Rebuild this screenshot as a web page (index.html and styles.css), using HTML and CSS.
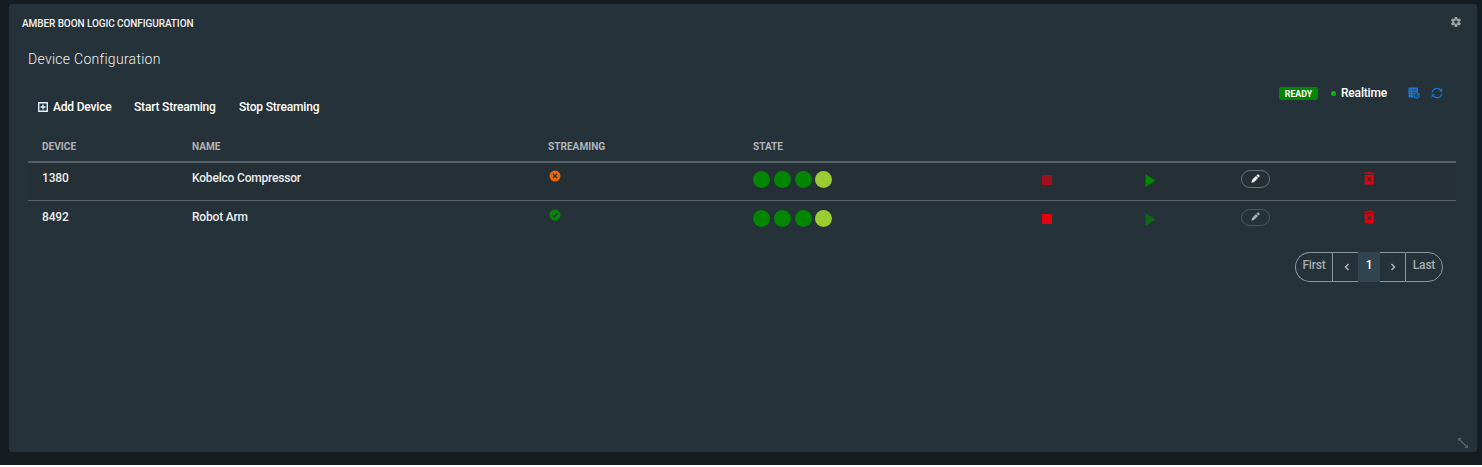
FILE: index.html
```html
<!DOCTYPE html>
<html lang="en">
<head>
<meta charset="utf-8">
<title>Amber Boon Logic Configuration</title>
<link rel="stylesheet" href="styles.css">
</head>
<body>
<svg class="sprite" aria-hidden="true">
  <symbol id="pencil" viewBox="0 0 12 12"><path d="M.5 11.500l.9-3.600L6.600 2.600l2.800 2.800L4.100 10.600zM7.300 1.900L8.800.600q.6-.5 1.200 0l1.400 1.400q.5.600 0 1.200L10.100 4.700z"/></symbol>
  <symbol id="trash" viewBox="0 0 12 14"><path d="M0 1h3.800V0h4v1H11.500v1.500H0z" opacity=".75"/><path fill-rule="evenodd" d="M.8 3.500h9.900V14H.8zM3.300 6l1.700 2-1.900 2.200.9.700 1.800-2 1.800 2 .9-.7L6.600 8l1.700-2-.9-.7-1.600 1.800-1.600-1.800z"/></symbol>
  <symbol id="play" viewBox="0 0 11 13"><path d="M.5 0L10.500 6.500.5 13z"/></symbol>
</svg>
<main class="screen">
  <section class="panel">
    <header class="panel-head">
      <h1 class="panel-title">AMBER BOON LOGIC CONFIGURATION</h1>
      <svg class="gear" viewBox="0 0 24 24"><path d="M19.400 13a7.500 7.500 0 0 0 0-2l2.200-1.700a.5.500 0 0 0 .1-.6l-2-3.500a.5.500 0 0 0-.6-.2l-2.600 1a8 8 0 0 0-1.700-1l-.4-2.700a.5.500 0 0 0-.5-.4h-4a.5.500 0 0 0-.5.400L9 5a8 8 0 0 0-1.700 1l-2.600-1a.5.500 0 0 0-.6.200l-2 3.500a.5.500 0 0 0 .1.600L4.400 11a8 8 0 0 0 0 2l-2.200 1.700a.5.500 0 0 0-.1.600l2 3.500c.1.200.4.300.6.200l2.600-1a8 8 0 0 0 1.700 1l.4 2.700c0 .2.200.4.500.4h4c.2 0 .5-.2.500-.4l.4-2.700a8 8 0 0 0 1.700-1l2.600 1c.2.100.5 0 .6-.2l2-3.500a.5.500 0 0 0-.1-.6zM12 15.500a3.500 3.500 0 1 1 0-7 3.500 3.500 0 0 1 0 7z"/></svg>
    </header>
    <h2 class="subtitle">Device Configuration</h2>
    <div class="toolbar">
      <nav class="actions">
        <a class="action add"><svg class="plus" viewBox="0 0 10 10"><path d="M.75.75h8.500v8.500H.75zM5 2.500v5M2.500 5h5"/></svg>Add Device</a>
        <a class="action start">Start Streaming</a>
        <a class="action">Stop Streaming</a>
      </nav>
      <div class="status">
        <span class="badge">READY</span>
        <span class="dot"></span>
        <span class="realtime">Realtime</span>
        <svg class="list" viewBox="0 0 12 12"><path d="M.5.500h9.500v5.200a3.500 3.500 0 0 0-4.800 4.800H.5z"/><path class="cut" d="M2 3h1M4 3h4.500M2 5.300h1M4 5.300h3M2 7.600h1M4 7.600h1"/><circle class="ring" cx="8.600" cy="8.600" r="2.600"/><path class="tick" d="M7.300 8.600l1 1 2.300-2.800"/></svg>
        <svg class="refresh" viewBox="0 0 12 12"><path d="M1.100 5.300A5 4.900 0 0 1 10 3.300M10.900 6.700A5 4.900 0 0 1 2 8.700"/><path class="heads" d="M11.300 1.300v3.400H8zM.7 10.700V7.300H4z"/></svg>
      </div>
    </div>
    <div class="table">
      <div class="row head"><span>DEVICE</span><span>NAME</span><span>STREAMING</span><span>STATE</span></div>
      <div class="row data shaded">
        <span>1380</span><span>Kobelco Compressor</span>
        <svg class="stream off" viewBox="0 0 12 12"><circle cx="6" cy="6" r="5.500"/><path d="M4 4l4 4M8 4L4 8"/></svg>
        <span class="lights"><i></i><i></i><i></i><i class="lime"></i></span>
        <span class="stop dim"></span>
        <svg class="play"><use href="#play"/></svg>
        <span class="edit"><svg><use href="#pencil"/></svg></span>
        <svg class="trash"><use href="#trash"/></svg>
      </div>
      <div class="row data">
        <span>8492</span><span>Robot Arm</span>
        <svg class="stream on" viewBox="0 0 12 12"><circle cx="6" cy="6" r="5.500"/><path d="M3.500 6.300l1.800 1.600L8.700 4"/></svg>
        <span class="lights"><i></i><i></i><i></i><i class="lime"></i></span>
        <span class="stop"></span>
        <svg class="play dim"><use href="#play"/></svg>
        <span class="edit dim"><svg><use href="#pencil"/></svg></span>
        <svg class="trash"><use href="#trash"/></svg>
      </div>
    </div>
    <div class="pager">
      <span class="page first">First</span>
      <span class="page prev"><svg viewBox="0 0 6 8"><path d="M4.500 1L1.500 4l3 3"/></svg></span>
      <span class="page current">1</span>
      <span class="page next"><svg viewBox="0 0 6 8"><path d="M1.500 1l3 3-3 3"/></svg></span>
      <span class="page last">Last</span>
    </div>
    <svg class="resize" viewBox="0 0 12 12"><path d="M2 2l8 8"/><path class="tips" d="M1 1h3.500L1 4.500zM11 11H7.500L11 7.500z"/></svg>
  </section>
</main>
</body>
</html>
```
FILE: styles.css
```css
* { box-sizing: border-box; }
body { margin: 0; background: #fff; font-family: Roboto, "Liberation Sans", sans-serif; font-size: 12px; letter-spacing: -.19px; font-weight: 500; color: #ececec; }
svg { display: block; }
.sprite { display: none; }
.screen { height: 465px; padding: 4px 5px 13px 9px; background: #151d20; }
.panel { position: relative; height: 448px; background: #263239; border-radius: 3px; }
.panel-head { display: flex; justify-content: space-between; padding: 12px 15px 0 13px; height: 43px; }
.panel-title { margin: 1px 0 0; font-size: 10px; line-height: 14px; font-weight: 500; letter-spacing: -.08px; color: #f2f2f2; white-space: nowrap; }
.gear { width: 12px; height: 12px; fill: #9b9fa2; }
.subtitle { margin: 0 0 0 19px; height: 32px; font-size: 14px; line-height: 24px; font-weight: 300; color: #f0f0f0; letter-spacing: .28px; }
.toolbar { display: flex; justify-content: space-between; height: 50px; padding: 0 34px 0 29px; }
.actions { display: flex; align-items: flex-start; padding-top: 20px; line-height: 16px; color: #fff; white-space: nowrap; }
.action { display: flex; align-items: center; }
.add { width: 96px; gap: 5px; }
.start { width: 105px; }
.plus { width: 10px; height: 10px; fill: none; stroke: #e0f4ff; stroke-width: 1.4; }
.status { display: flex; align-items: center; height: 20px; margin-top: 4px; color: #fff; }
.badge { width: 39px; height: 13px; margin: 1px 13px 0 0; border-radius: 2px; background: #028602; font-size: 8.800px; line-height: 14px; font-weight: 700; text-align: center; letter-spacing: 0; }
.dot { width: 5px; height: 5px; margin: 1px 5px 0 0; border-radius: 50%; background: #0ab40a; }
.realtime { width: 67px; line-height: 16px; }
.list { width: 12px; height: 12px; margin-right: 11px; fill: #1976d2; }
.list .cut { fill: none; stroke: #263238; stroke-width: .6; }
.list .ring { fill: none; stroke: #1976d2; stroke-width: 1.1; }
.list .tick { fill: none; stroke: #1976d2; }
.refresh { width: 12px; height: 12px; fill: none; stroke: #1976d2; stroke-width: 1.2; }
.refresh .heads { fill: #1976d2; stroke: none; }
.table { width: 1428px; margin-left: 19px; }
.row { display: grid; grid-template-columns: 150px 356px 205px 288px 104px 96px 123px 1fr; padding-left: 14px; align-items: start; }
.head { height: 34px; padding-top: 11px; border-bottom: 2px solid #566067; font-size: 10.100px; line-height: 14px; font-weight: 700; letter-spacing: 0; color: #b0b4b6; }
.data { height: 39px; padding-top: 8px; line-height: 16px; }
.data.shaded { height: 38px; padding-top: 7px; background: #243036; border-bottom: 1px solid #56636a; }
.stream { width: 12px; height: 12px; margin: 0 0 0 1px; }
.stream path { fill: none; stroke: #263238; stroke-width: 1.2; }
.off { fill: #ea6508; }
.on { fill: #078507; }
.lights { display: flex; gap: 3.800px; padding-top: 1px; }
.lights i { width: 17px; height: 17px; border-radius: 50%; background: #028602; }
.lights .lime { background: #9acd32; }
.stop { width: 10px; height: 10px; margin: 5px 0 0 1px; background: #e3000f; }
.stop.dim { opacity: .65; }
.play { width: 11px; height: 13px; margin-top: 4px; fill: #028602; }
.play.dim { opacity: .65; }
.edit { display: grid; place-items: center; width: 29px; height: 18px; border: 1px solid #687278; border-radius: 9px; }
.edit svg { width: 9px; height: 9px; margin-bottom: 2px; fill: #fff; }
.edit.dim { height: 17px; opacity: .6; }
.trash { width: 11px; height: 14px; margin-top: 1px; fill: #e3000f; }
.pager { display: flex; width: 148px; height: 30px; margin: 12px 0 0 1286px; color: #a6adb1; line-height: 25px; }
.page { border: 1px solid #8c979c; border-width: 1px 0; text-align: center; }
.page svg { width: 6px; height: 8px; margin: 10px auto 0; fill: none; stroke: #b7bdc0; stroke-width: 1.4; }
.first { width: 37px; border-left-width: 1px; border-radius: 15px 0 0 15px; }
.prev { width: 26px; border-left-width: 1px; }
.prev svg { margin-left: 11px; }
.current { width: 22px; background: #314550; border-color: #314550; color: #fff; }
.next { width: 25px; }
.last { width: 38px; border-width: 1px; border-radius: 0 15px 15px 0; }
.resize { position: absolute; right: 8px; bottom: 3px; width: 12px; height: 12px; fill: none; stroke: #58646a; stroke-width: 1.3; }
.resize .tips { fill: #58646a; stroke: none; }
```
